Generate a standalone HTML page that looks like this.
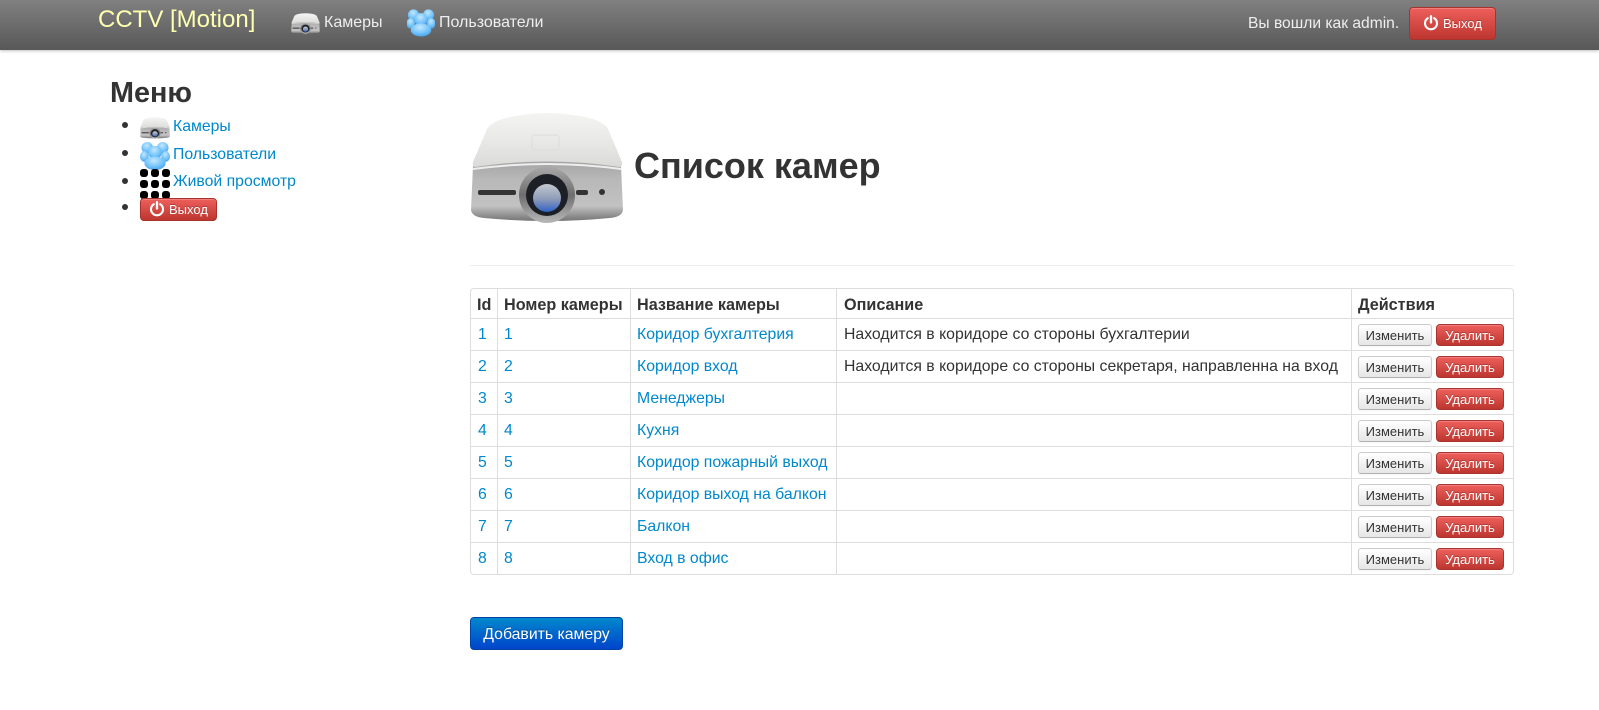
<!DOCTYPE html>
<html lang="ru">
<head>
<meta charset="utf-8">
<title>Список камер</title>
<style>
html,body{margin:0;padding:0;background:#fff;width:1599px;height:710px;overflow:hidden}
body{font-family:"Liberation Sans",sans-serif;font-size:15.8px;color:#333;position:relative}
a{color:#0088cc;text-decoration:none}
.abs{position:absolute;white-space:nowrap}
#nav{position:absolute;left:0;top:0;width:1599px;height:50px;background:linear-gradient(#808080,#585858);box-shadow:0 1px 3px rgba(0,0,0,.25)}
.btn-red{position:absolute;box-sizing:border-box;background:linear-gradient(#ee5f5b,#bd362f);border:1px solid #a8322c;border-radius:4px;color:#fff;text-shadow:0 -1px 0 rgba(0,0,0,.25);white-space:nowrap;box-shadow:inset 0 1px 0 rgba(255,255,255,.2)}
.pw{position:absolute}
#tb{position:absolute;left:470px;top:288px;width:1044px;height:287px;box-sizing:border-box;border:1px solid #ddd;border-radius:4px}
.hl{position:absolute;left:471px;width:1042px;height:1px;background:#ddd}
.vl{position:absolute;top:289px;height:285px;width:1px;background:#ddd}
.th{position:absolute;font-weight:bold;top:295px;line-height:20px;white-space:nowrap;color:#333;font-size:16.2px}
.td{position:absolute;line-height:20px;white-space:nowrap}
.be{position:absolute;left:1358px;width:74px;height:22px;box-sizing:border-box;border:1px solid #ccc;border-bottom-color:#b3b3b3;border-radius:3px;background:linear-gradient(#fff,#e6e6e6);font-size:13px;line-height:21px;text-align:center;color:#333;box-shadow:0 1px 2px rgba(0,0,0,.05)}
.bd{left:1436px;width:68px;height:22px;font-size:13px;line-height:21px;text-align:center}
</style>
</head>
<body>
<svg width="0" height="0" style="position:absolute">
<defs>
<linearGradient id="gTop" x1="0" y1="0" x2="0" y2="1"><stop offset="0" stop-color="#f4f4f3"/><stop offset=".5" stop-color="#e9e9e7"/><stop offset="1" stop-color="#dadad8"/></linearGradient>
<linearGradient id="gBody" x1="0" y1="0" x2="0" y2="1"><stop offset="0" stop-color="#a4a4a4"/><stop offset=".3" stop-color="#b8b8b8"/><stop offset=".75" stop-color="#c2c2c2"/><stop offset="1" stop-color="#747474"/></linearGradient>
<linearGradient id="gRing" x1="0" y1="0" x2="0" y2="1"><stop offset="0" stop-color="#a8a8a8"/><stop offset=".5" stop-color="#6e6e6e"/><stop offset="1" stop-color="#b8b8b8"/></linearGradient>
<linearGradient id="gLens" x1="0" y1="0" x2="0" y2="1"><stop offset="0" stop-color="#c4c8d0"/><stop offset=".55" stop-color="#8c9ab8"/><stop offset="1" stop-color="#2f62c8"/></linearGradient>
<radialGradient id="gBlue" cx=".45" cy=".3" r=".8"><stop offset="0" stop-color="#c4e8ff"/><stop offset=".6" stop-color="#6cc0fa"/><stop offset="1" stop-color="#3a94e8"/></radialGradient>
<symbol id="proj" viewBox="0 0 154 112">
<path d="M3 54 L1 98 Q2 105 14 106 Q77 112 140 106 Q152 105 153 98 L151 54 Q77 44 3 54Z" fill="url(#gBody)"/>
<path d="M3 56 Q77 46 151 56 L151 58 Q77 48 3 58Z" fill="#eeeeee"/>
<path d="M17 17 Q22 8 45 4 Q77 -2 110 4 Q133 8 138 17 L152 50 Q153 54 150 55 Q77 44 5 55 Q2 54 3 50Z" fill="url(#gTop)"/>
<rect x="62" y="23" width="27" height="15" rx="3" fill="none" stroke="#dcdcda"/>
<rect x="8" y="78" width="38" height="5" rx="2" fill="#333"/>
<rect x="106" y="78" width="12" height="5" rx="2" fill="#333"/>
<circle cx="132" cy="80" r="3" fill="#333"/>
<circle cx="77" cy="83" r="28" fill="url(#gRing)"/>
<circle cx="77" cy="83" r="21" fill="#1c2026"/>
<circle cx="77" cy="86" r="14" fill="url(#gLens)"/>
</symbol>
<symbol id="users" viewBox="0 0 30 30">
<circle cx="7" cy="7" r="6" fill="url(#gBlue)"/><circle cx="23" cy="7" r="6" fill="url(#gBlue)"/>
<ellipse cx="4" cy="16" rx="4.5" ry="5.5" fill="url(#gBlue)"/><ellipse cx="26" cy="16" rx="4.5" ry="5.5" fill="url(#gBlue)"/>
<circle cx="15" cy="12" r="7" fill="url(#gBlue)"/>
<ellipse cx="15" cy="23" rx="11" ry="7" fill="url(#gBlue)"/>
</symbol>
<symbol id="power" viewBox="0 0 16 16">
<path d="M4.8 3.2A6 6 0 1 0 11.2 3.2" fill="none" stroke="#fff" stroke-width="2.1" stroke-linecap="round"/>
<path d="M8 1.2V7.5" fill="none" stroke="#fff" stroke-width="2.3" stroke-linecap="round"/>
</symbol>
</defs>
</svg>

<div id="nav">
<div class="abs" style="left:98px;top:5px;font-size:24px;line-height:30px;color:#ffffb0">CCTV [Motion]</div>
<svg class="abs" style="left:291px;top:13px" width="29" height="21"><use href="#proj" width="29" height="21"/></svg>
<div class="abs" style="left:324px;top:13px;line-height:20px;color:#eee;font-size:16px">Камеры</div>
<svg class="abs" style="left:407px;top:8px" width="28" height="29"><use href="#users" width="28" height="29"/></svg>
<div class="abs" style="left:439px;top:13px;line-height:20px;color:#eee;font-size:16px">Пользователи</div>
<div class="abs" style="left:1248px;top:14px;line-height:20px;color:#eee;font-size:15.6px">Вы вошли как admin.</div>
<div class="btn-red" style="left:1409px;top:7px;width:87px;height:33px;font-size:13px;line-height:31px;padding-left:33px">Выход</div>
<svg class="pw" style="left:1423px;top:15px" width="16" height="16"><use href="#power" width="16" height="16"/></svg>
</div>

<div class="abs" style="left:110px;top:76px;font-size:28.8px;font-weight:bold;line-height:34px;color:#333">Меню</div>
<div class="abs" style="left:122px;top:122px;width:6px;height:6px;border-radius:3px;background:#333"></div>
<div class="abs" style="left:122px;top:150px;width:6px;height:6px;border-radius:3px;background:#333"></div>
<div class="abs" style="left:122px;top:178px;width:6px;height:6px;border-radius:3px;background:#333"></div>
<div class="abs" style="left:122px;top:204px;width:6px;height:6px;border-radius:3px;background:#333"></div>
<svg class="abs" style="left:140px;top:117px" width="30" height="22"><use href="#proj" width="30" height="22"/></svg>
<a class="abs" href="#" style="left:173px;top:117px;line-height:20px">Камеры</a>
<svg class="abs" style="left:140px;top:141px" width="30" height="29"><use href="#users" width="30" height="29"/></svg>
<a class="abs" href="#" style="left:173px;top:145px;line-height:20px">Пользователи</a>
<svg class="abs" style="left:140px;top:168px" width="30" height="31">
<g fill="#000"><rect x="0" y="1" width="8" height="8" rx="3"/><rect x="11" y="1" width="8" height="8" rx="3"/><rect x="22" y="1" width="8" height="8" rx="3"/><rect x="0" y="12" width="8" height="8" rx="3"/><rect x="11" y="12" width="8" height="8" rx="3"/><rect x="22" y="12" width="8" height="8" rx="3"/><rect x="0" y="23" width="8" height="8" rx="3"/><rect x="11" y="23" width="8" height="8" rx="3"/><rect x="22" y="23" width="8" height="8" rx="3"/></g>
</svg>
<a class="abs" href="#" style="left:173px;top:172px;line-height:20px">Живой просмотр</a>
<div class="btn-red" style="left:140px;top:198px;width:77px;height:23px;font-size:13px;line-height:21px;padding-left:28px">Выход</div>
<svg class="pw" style="left:149px;top:201px" width="16" height="16"><use href="#power" width="16" height="16"/></svg>

<svg class="abs" style="left:470px;top:112px" width="154" height="112"><use href="#proj" width="154" height="112"/></svg>
<div class="abs" style="left:634px;top:144px;font-size:36px;font-weight:bold;line-height:44px;color:#333">Список камер</div>
<div class="abs" style="left:470px;top:265px;width:1044px;height:1px;background:#eee"></div>

<div id="tb"></div>
<div class="hl" style="top:318px"></div><div class="hl" style="top:350px"></div><div class="hl" style="top:382px"></div><div class="hl" style="top:414px"></div><div class="hl" style="top:446px"></div><div class="hl" style="top:478px"></div><div class="hl" style="top:510px"></div><div class="hl" style="top:542px"></div>
<div class="vl" style="left:497px"></div><div class="vl" style="left:630px"></div><div class="vl" style="left:836px"></div><div class="vl" style="left:1351px"></div>

<div class="th" style="left:477px">Id</div>
<div class="th" style="left:504px">Номер камеры</div>
<div class="th" style="left:637px">Название камеры</div>
<div class="th" style="left:844px">Описание</div>
<div class="th" style="left:1358px">Действия</div>

<a class="td" href="#" style="left:478px;top:325px">1</a><a class="td" href="#" style="left:504px;top:325px">1</a><a class="td" href="#" style="left:637px;top:325px">Коридор бухгалтерия</a><div class="td" style="left:844px;top:325px">Находится в коридоре со стороны бухгалтерии</div>
<a class="td" href="#" style="left:478px;top:357px">2</a><a class="td" href="#" style="left:504px;top:357px">2</a><a class="td" href="#" style="left:637px;top:357px">Коридор вход</a><div class="td" style="left:844px;top:357px">Находится в коридоре со стороны секретаря, направленна на вход</div>
<a class="td" href="#" style="left:478px;top:389px">3</a><a class="td" href="#" style="left:504px;top:389px">3</a><a class="td" href="#" style="left:637px;top:389px">Менеджеры</a>
<a class="td" href="#" style="left:478px;top:421px">4</a><a class="td" href="#" style="left:504px;top:421px">4</a><a class="td" href="#" style="left:637px;top:421px">Кухня</a>
<a class="td" href="#" style="left:478px;top:453px">5</a><a class="td" href="#" style="left:504px;top:453px">5</a><a class="td" href="#" style="left:637px;top:453px">Коридор пожарный выход</a>
<a class="td" href="#" style="left:478px;top:485px">6</a><a class="td" href="#" style="left:504px;top:485px">6</a><a class="td" href="#" style="left:637px;top:485px">Коридор выход на балкон</a>
<a class="td" href="#" style="left:478px;top:517px">7</a><a class="td" href="#" style="left:504px;top:517px">7</a><a class="td" href="#" style="left:637px;top:517px">Балкон</a>
<a class="td" href="#" style="left:478px;top:549px">8</a><a class="td" href="#" style="left:504px;top:549px">8</a><a class="td" href="#" style="left:637px;top:549px">Вход в офис</a>

<div class="be" style="top:324px">Изменить</div><div class="btn-red bd" style="top:324px">Удалить</div>
<div class="be" style="top:356px">Изменить</div><div class="btn-red bd" style="top:356px">Удалить</div>
<div class="be" style="top:388px">Изменить</div><div class="btn-red bd" style="top:388px">Удалить</div>
<div class="be" style="top:420px">Изменить</div><div class="btn-red bd" style="top:420px">Удалить</div>
<div class="be" style="top:452px">Изменить</div><div class="btn-red bd" style="top:452px">Удалить</div>
<div class="be" style="top:484px">Изменить</div><div class="btn-red bd" style="top:484px">Удалить</div>
<div class="be" style="top:516px">Изменить</div><div class="btn-red bd" style="top:516px">Удалить</div>
<div class="be" style="top:548px">Изменить</div><div class="btn-red bd" style="top:548px">Удалить</div>

<div class="abs" style="left:470px;top:617px;width:153px;height:33px;box-sizing:border-box;background:linear-gradient(#0088cc,#0044cc);border:1px solid #0044a8;border-radius:4px;color:#fff;line-height:33px;text-align:center;text-shadow:0 -1px 0 rgba(0,0,0,.25)">Добавить камеру</div>
</body>
</html>
